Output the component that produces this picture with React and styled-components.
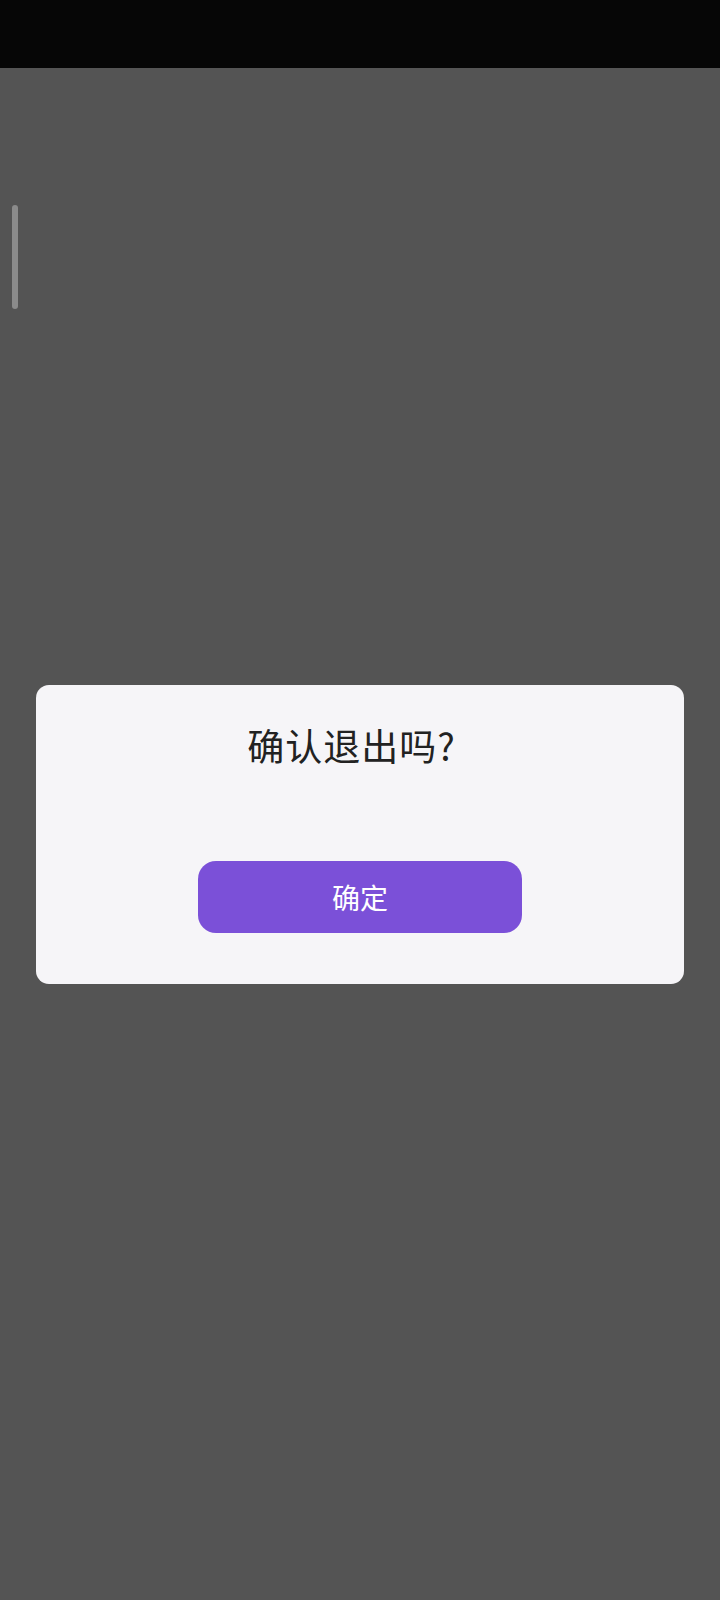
import React from 'react';
import styled, { createGlobalStyle } from 'styled-components';

const GlobalStyle = createGlobalStyle`
  html, body {
    margin: 0;
    padding: 0;
    background: #545454;
  }
  body {
    font-family: "Noto Sans CJK SC", "Noto Sans", sans-serif;
  }
`;

const Screen = styled.div`
  position: relative;
  display: flex;
  flex-direction: column;
  width: 720px;
  height: 1600px;
  background: #545454;
`;

const StatusBar = styled.div`
  height: 68px;
  flex-shrink: 0;
  background: #060606;
`;

const Content = styled.main`
  flex: 1;
  display: flex;
  align-items: center;
  justify-content: center;
  padding: 0 36px;
`;

const ScrollThumb = styled.div`
  position: absolute;
  left: 12px;
  top: 205px;
  width: 6px;
  height: 104px;
  border-radius: 3px;
  background: #8b8b8b;
`;

const Dialog = styled.div`
  width: 100%;
  box-sizing: border-box;
  display: flex;
  flex-direction: column;
  align-items: center;
  padding: 35px 0 51px;
  background: #f6f5f8;
  border-radius: 13px;
`;

const Title = styled.h2`
  margin: 0;
  padding-right: 17px;
  font-size: 37px;
  line-height: 50px;
  letter-spacing: 1px;
  font-weight: 400;
  color: #222222;
`;

const ConfirmButton = styled.button`
  margin-top: 91px;
  width: 324px;
  height: 72px;
  border: none;
  border-radius: 18px;
  background: #7b50d8;
  color: #ffffff;
  font-family: "Noto Sans CJK SC", "Noto Sans", sans-serif;
  font-size: 28px;
  line-height: 1;
  cursor: pointer;
`;

export default function App() {
  return (
    <>
      <GlobalStyle />
      <Screen>
        <StatusBar />
        <ScrollThumb />
        <Content>
          <Dialog>
            <Title>确认退出吗?</Title>
            <ConfirmButton>确定</ConfirmButton>
          </Dialog>
        </Content>
      </Screen>
    </>
  );
}
